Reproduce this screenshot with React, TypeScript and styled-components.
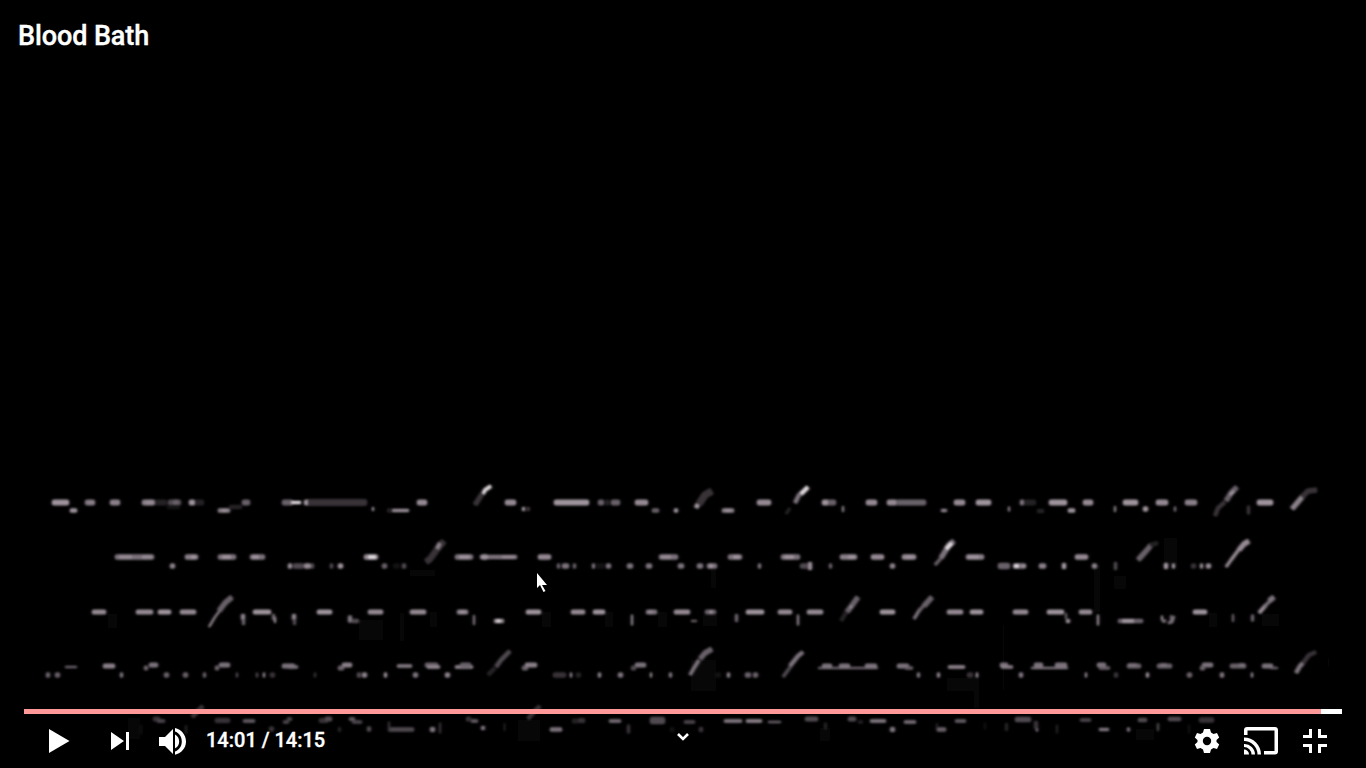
import React from "react";
import styled, { createGlobalStyle } from "styled-components";

const GlobalStyle = createGlobalStyle`
  * { box-sizing: border-box; }
  html, body { margin: 0; background: #000; overflow: hidden; }
`;

const Player = styled.main`
  display: grid;
  grid-template: 100vh / 100vw;
  background: #000;
  color: #fff;
  font-family: Roboto, sans-serif;
  overflow: hidden;
`;

const Frame = styled.svg`
  grid-area: 1 / 1;
  width: 1366px;
  height: 768px;
  display: block;
`;

const Chrome = styled.div`
  grid-area: 1 / 1;
  z-index: 1;
  display: flex;
  flex-direction: column;
  justify-content: space-between;
`;

const Title = styled.h1`
  margin: 0;
  padding: 21px 18px 0;
  font-size: 27px;
  line-height: 31px;
  font-weight: 500;
  letter-spacing: -0.1px;
  -webkit-text-stroke: 0.4px #fff;
`;

const Bottom = styled.div`
  padding: 0 24px;
`;

const Track = styled.div`
  height: 5px;
  background: #fff;
`;

const Played = styled.div`
  width: 1297px;
  height: 5px;
  background: #ff9898;
`;

const Controls = styled.div`
  height: 54px;
  display: grid;
  grid-template-columns: 1fr 16px 1fr;
`;

const Group = styled.div<{ $end?: boolean }>`
  display: flex;
  align-items: center;
  justify-content: ${(p) => (p.$end ? "flex-end" : "flex-start")};
  padding: ${(p) => (p.$end ? "0 14px 0 0" : "0 0 0 24px")};
`;

const IconButton = styled.button<{ $w: number; $gap?: number }>`
  width: ${(p) => p.$w}px;
  height: 36px;
  margin: 0 ${(p) => p.$gap ?? 0}px 0 0;
  padding: 0;
  border: 0;
  background: none;
  color: #fff;
  svg { display: block; fill: currentColor; }
`;

const Expand = styled(IconButton)`
  height: 16px;
  margin-top: 14px;
`;

const Time = styled.span`
  font-size: 20px;
  line-height: 34px;
  padding-bottom: 2px;
  font-weight: 500;
  white-space: pre;
  -webkit-text-stroke: 0.35px #fff;
`;

const Cursor = styled.svg`
  position: absolute;
  left: 536px;
  top: 573px;
  z-index: 2;
`;

/* Each band: centre y, height, then marks as "x1-x2:level[@y][/height]". */
const bands: [number, number, string][] = [
  [502.5, 5.4, "52-69:9 85-95:6 88-94:7/4 110-120:7 142-155:7 146-153:8/5 155-167:2 168-181:4 173-179:5 189-195:9 195-204:2 242-250:5 282-293:5 291-301:10/3 304-310:9 308-367:3/6.5 417-427:8 505-516:8 554-589:9 598-604:5 605-610:2 611-620:5 635-648:8 757-771:8 822-829:9 828-836:5 866-877:8 887-897:8 896-926:5 954-965:8 976-991:9 1020-1024:6 1024-1036:2 1049-1067:9 1083-1093:8 1123-1138:9 1156-1168:8 1185-1197:7 1257-1273:9"],
  [510.5, 4, "70-77:9 218-230:7 222-227:9/3 229-242:2@507 167-180:1@507 372-374:9@509 392-409:8/3 387-392:2 522-525:9@509 526-530:3@509 652-659:5 674-678:9 722-734:7 725-731:9/3 842-844:7@509/6 941-947:7/3 1008-1010:7@509/5 1037-1044:2@511 1068-1075:9 1114-1116:7@509/6 1143-1148:9@509/5 1174-1176:6@509/5 1247-1250:3@510/9"],
  [557, 5, "115-154:6 119-132:8/4 142-152:8/4 185-198:7 191-196:9/4 218-236:6 222-231:9/4 250-265:6 252-259:9/4 364-378:8 368-376:10/4 455-473:6 459-470:9/4 480-517:6/4 481-488:9 502-515:8/3 538-551:8 659-678:6 661-671:8/4 728-742:6 733-740:9/4 781-800:6 784-794:9/4 840-857:7 848-855:9/4 871-884:8 902-916:8 906-912:9/4 966-984:7 968-979:9/4 1075-1088:8"],
  [566, 5, "170-175:7 288-292:8 293-304:4 304-311:8 311-314:4 330-333:4 338-343:9 382-387:5 393-400:1 402-406:4 557-560:5 562-569:6 573-576:5 592-595:6 596-605:1 606-611:6 627-633:6 646-652:6 678-684:6 697-703:6 707-717:6 709-713:9/4 758-761:6 800-808:4 808-812:8/8 829-832:5 890-895:7 998-1010:5/6 1013-1026:6 1014-1019:10/4 1021-1026:8/4 1039-1046:7 1062-1066:9/6 1092-1097:7 1114-1117:4/8 1164-1168:9/6 1172-1175:9 1191-1196:3 1200-1203:8 1206-1211:8"],
  [612, 4.5, "92-106:8 136-153:8 158-171:9 180-196:8 253-271:9 317-332:9 368-383:8 410-426:8 457-468:7 460-465:9/3 526-541:9 571-585:8 593-605:9 646-657:6 648-653:8/3 674-690:8 705-716:5 709-713:9/3 746-764:9 778-792:8 807-823:8 880-895:9 947-963:8 970-983:9 1013-1028:8 1047-1064:9 1079-1092:8 1193-1207:9"],
  [619.5, 6, "241-245:7@617 242-245:5@622 272-275:5@617 274-276:8@620 292-296:7@617 293-296:4@622 348-352:6@619/7 352-359:4@621/4 473-475:6@620/10 494-504:7@621/4 496-501:10@621/3 631-633:7@620/11 691-697:5@621/2 735-738:5@618/8 797-799:7@620/11 1065-1067:5@616 1066-1070:8@621/4 1097-1099:8@620/11 1118-1143:5@621/4 1122-1134:9@621/4 1161-1163:8@618/5 1162-1166:6@621/3 1170-1172:5@618/6 1232-1234:5@618/8 1251-1254:5@618/7"],
  [666, 4.5, "65-77:5@667/2 103-115:7 144-148:5@668 149-158:6@665 215-219:5@668 219-230:6@665 282-295:6 288-298:6@667/3 338-344:5@668 342-352:7@665 397-412:7/3 425-438:5@665 427-440:8@667/3 455-473:8@667/3 460-471:5@665 522-528:5@668 525-537:7@665 631-636:4@668 635-646:6@665 818-878:5@668/2 822-832:6@666 839-850:6@666 865-877:6@666 897-909:6 905-913:5@668/3 948-965:8@667/3 1000-1008:6@665 1001-1013:7@667/3 1031-1068:6@668/2 1034-1043:6@665 1055-1067:6@665 1097-1106:6@665 1099-1110:5@668/3 1127-1141:5 1128-1137:6@665/3 1157-1172:5 1160-1167:6@665/3 1202-1213:6@665 1200-1205:5@668 1230-1246:5 1239-1245:6@665/3 1262-1273:6 1270-1278:5@668/2"],
  [675, 5, "46-50:5 55-60:5 120-123:6 164-169:5 183-188:5 203-206:5 236-238:4 256-258:4 263-265:8 270-275:3 314-316:3 357-361:4 362-367:7 384-387:8 413-418:6 445-450:7 553-566:3 570-572:8 576-581:2 598-601:7 618-623:6 650-652:8 669-672:6 715-721:1 727-730:7 745-751:5 753-758:5 917-920:6 937-940:7 967-973:3 976-978:9 1019-1023:6 1085-1087:8 1114-1118:3 1146-1149:8 1187-1192:5 1220-1224:6 1251-1253:8"],
  [720.5, 4.5, "153-160:3@719 157-165:4@721/3 215-230:3 243-255:5@721/3 283-289:4@722/3 287-292:4@719/3 319-328:3 325-332:4@719 349-355:5@719/3 352-362:4@722/3 466-471:3@719 471-478:5@721/3 572-578:2@721 578-585:3 609-621:6@721/3 650-665:4/7 684-695:4@722/3 724-742:7@721/3 746-762:8@721/3 768-781:5@722/2 805-818:4@719 848-856:4@719 858-863:2@722/3 870-886:7@721/3 904-916:6@722/3 955-966:5@721/3 1015-1031:4@719.5/5 1080-1091:4@720/3 1138-1147:4@720/4 1168-1181:4@719/4 1199-1214:3@720/5"],
  [729.5, 5, "140-142:1/10 185-187:2/9 269-274:3@729 338-341:2 367-371:4@729 388-414:4/4 388-390:3@726/9 430-435:6 439-441:3@728/11 481-485:6@728/4 504-505:3@727/8 550-562:6/4 627-630:3@729/9 670-674:1 699-703:3 824-827:2@726/7 890-895:6 936-938:2@727/8 937-946:5/4 984-986:1@726/7 1005-1008:2@727/8 1034-1038:3@725/8 1036-1038:7@730/3 1056-1058:2@729/9 1099-1109:6/3 1127-1130:6/4 1157-1159:4@727/8 1188-1190:1@729/9"],
];

/* Diagonal strokes: points, level, width. */
const strokes: [string, number, number][] = [
  ["475,505 482,494", 3, 5], ["483,494 485,490 491,486", 10, 3.5],
  ["696,508 698,504", 9, 4.5], ["699,504 705,495 712,491", 3, 7],
  ["786,514 790,508", 2, 3], ["795,503 799,495 803,492", 6, 4], ["801,494 808,487", 10, 4],
  ["1215,516 1218,508 1225,502", 3, 4], ["1226,501 1231,493 1237,487", 5, 5], ["1230,495 1234,491", 9, 3],
  ["1292,509 1303,496", 7, 5], ["1302,497 1308,491 1317,490", 3, 5],
  ["426,562 430,559 438,548 444,541", 3, 6], ["437,549 440,543", 7, 4],
  ["935,565 942,557", 5, 3], ["941,558 949,545 954,541", 6, 5], ["946,549 952,543", 10, 4],
  ["1138,560 1147,550 1151,545", 5, 5], ["1150,545 1158,543", 2, 4],
  ["1226,567 1231,560 1240,548", 8, 3], ["1239,550 1244,544 1249,541", 8, 5],
  ["209,627 215,617 221,609", 8, 2], ["219,611 225,603 232,597", 5, 5],
  ["841,621 847,611", 2, 4], ["847,612 853,604 858,597", 5, 5], ["850,608 852,606", 9, 2],
  ["914,619 920,609", 6, 3], ["919,611 925,604", 5, 3], ["924,606 932,597", 5, 5],
  ["1259,613 1266,605", 8, 3.5], ["1264,607 1270,601", 6, 3], ["1269,601 1274,597", 6, 5],
  ["488,675 495,668", 2, 4], ["496,667 501,660 510,651", 4, 4],
  ["690,675 694,668 699,660", 6, 3.5], ["700,659 705,653 712,649", 5, 5],
  ["783,677 791,666", 4, 3], ["790,666 798,656 803,652", 6, 4],
  ["1296,673 1300,666 1303,663", 6, 4], ["1303,663 1309,655 1316,652", 3, 4],
  ["192,717 198,711 203,706", 3, 4], ["528,719 532,714 540,706", 3, 4],
  ["1174,616 1172,622 1168,623", 6, 2.5],
];

/* Faint compression blocks left in the picture: x, y, w, h. */
const blocks = [
  [359, 620, 24, 20], [400, 613, 4, 28], [108, 614, 9, 14], [430, 612, 7, 15],
  [542, 612, 9, 15], [605, 612, 8, 15], [658, 612, 9, 15], [703, 615, 14, 11],
  [1164, 538, 13, 27], [1094, 565, 6, 47], [1114, 576, 12, 13], [1262, 614, 17, 12],
  [691, 660, 25, 31], [711, 570, 5, 18], [947, 678, 27, 13], [974, 675, 5, 33],
  [1209, 613, 8, 14], [410, 570, 25, 6], [1003, 625, 1, 65], [128, 718, 12, 21],
  [820, 728, 10, 13], [518, 720, 22, 21], [1136, 729, 18, 11], [1328, 658, 1, 8],
];

const shades = ["#000", "#141314", "#252225", "#393338", "#504a50", "#696169", "#7c737c", "#8a8089", "#958a93", "#9f949d", "#dcd5da"];

const marks = bands.flatMap(([cy, bandH, list]) =>
  list.split(" ").map((item) => {
    const m = item.match(/^([\d.]+)-([\d.]+):(\d+)(?:@([\d.]+))?(?:\/([\d.]+))?$/)!;
    const h = m[5] ? +m[5] : bandH;
    return { x: +m[1], w: +m[2] - +m[1], y: (m[4] ? +m[4] : cy) - h / 2, h, c: shades[+m[3]] };
  })
);

const VideoFrame = () => (
  <Frame viewBox="0 0 1366 768" aria-hidden="true">
    <defs>
      <filter id="haze" colorInterpolationFilters="sRGB" filterUnits="userSpaceOnUse" x="0" y="470" width="1366" height="298">
        <feGaussianBlur stdDeviation="2.2 1.5" />
      </filter>
      <filter id="soft" colorInterpolationFilters="sRGB" filterUnits="userSpaceOnUse" x="0" y="470" width="1366" height="298">
        <feGaussianBlur stdDeviation="1.15 0.85" />
      </filter>
      <g id="notes">
        {marks.map((k, i) => (
          <rect key={i} x={k.x} y={k.y} width={k.w} height={k.h} rx={Math.min(2, k.w / 3, k.h / 3)} fill={k.c} />
        ))}
        {strokes.map(([points, level, width], i) => (
          <polyline key={i} points={points} fill="none" stroke={shades[level]} strokeWidth={width} strokeLinejoin="round" />
        ))}
      </g>
    </defs>
    {blocks.map(([x, y, w, h], i) => (
      <rect key={i} x={x} y={y} width={w} height={h} fill="#070707" />
    ))}
    <use href="#notes" filter="url(#haze)" opacity="0.4" />
    <use href="#notes" filter="url(#soft)" />
  </Frame>
);

export default function App() {
  return (
    <Player>
      <GlobalStyle />
      <VideoFrame />
      <Chrome>
        <Title>Blood Bath</Title>
        <Bottom>
          <Track><Played /></Track>
          <Controls>
            <Group>
              <IconButton $w={22} $gap={40} aria-label="Play">
                <svg width="22" height="36" viewBox="0 0 22 36"><path d="M1 6v24l20.5-12z" /></svg>
              </IconButton>
              <IconButton $w={20} $gap={28} aria-label="Next">
                <svg width="20" height="36" viewBox="0 0 20 36"><path d="M1 9v18l13-9zM16 9h3v18h-3z" /></svg>
              </IconButton>
              <IconButton $w={30} $gap={18} aria-label="Mute">
                <svg width="30" height="36" viewBox="0 0 30 36">
                  <path d="M1 14v9h6l8 8V6l-8 8zM17 11.500v13.800c2.500-1.200 4.200-3.800 4.200-6.900s-1.700-5.700-4.200-6.900zM17 5v3.400c4 1.300 6.800 5.200 6.800 10s-2.800 8.700-6.800 10v3.300c6.300-1.300 11-6.800 11-13.300s-4.700-12.100-11-13.400z" />
                </svg>
              </IconButton>
              <Time>14:01 / 14:15</Time>
            </Group>
            <Expand $w={16} aria-label="More">
              <svg width="16" height="16" viewBox="0 0 16 16"><path d="M3 6l5 5 5-5" style={{ fill: "none" }} stroke="#fff" strokeWidth="2.6" /></svg>
            </Expand>
            <Group $end>
              <IconButton $w={26} $gap={23} aria-label="Settings">
                <svg width="26" height="36" viewBox="-13 -18 26 36">
                  <path fillRule="evenodd" d="M-3-12h6l1 3.500 2.500 1.500 3.500-1 2.200 4.500L9.500-1v2l2.700 2.500L10 8l-3.500-1L4 8.500 3 12h-6l-1-3.500L-6.500 7-10 8l-2.200-4.500L-9.500 1v-2l-2.700-2.500L-10-8l3.500 1L-4-8.500zM0-4.200a4.200 4.200 0 1 0 0 8.400 4.200 4.200 0 0 0 0-8.400z" />
                </svg>
              </IconButton>
              <IconButton $w={36} $gap={23} aria-label="Cast">
                <svg width="36" height="36" viewBox="0 0 36 36">
                  <path d="M4 4h28c1.800 0 3 1.200 3 3v21.500c0 1.800-1.200 3-3 3H21V28h10.500V7.500h-27V12H1V7c0-1.800 1.200-3 3-3zM1 26.500a5 5 0 0 1 5 5H1zM1 21v3a7.500 7.500 0 0 1 7.500 7.500h3.500A10.500 10.500 0 0 0 1 21zM1 14.500V18a13.500 13.500 0 0 1 13.500 13.500H18A17 17 0 0 0 1 14.500z" />
                </svg>
              </IconButton>
              <IconButton $w={26} aria-label="Exit full screen">
                <svg width="26" height="36" viewBox="0 0 26 36">
                  <path d="M7 6h3v9H1v-3h6zM16 6h3v6h6v3h-9zM1 21h9v9H7v-6H1zM16 21h9v3h-6v6h-3z" />
                </svg>
              </IconButton>
            </Group>
          </Controls>
        </Bottom>
      </Chrome>
      <Cursor width="14" height="21" viewBox="0 0 14 21">
        <path d="M1 0v15l3-3 3.500 7 2-1-3.500-6h5z" fill="#fff" />
      </Cursor>
    </Player>
  );
}
